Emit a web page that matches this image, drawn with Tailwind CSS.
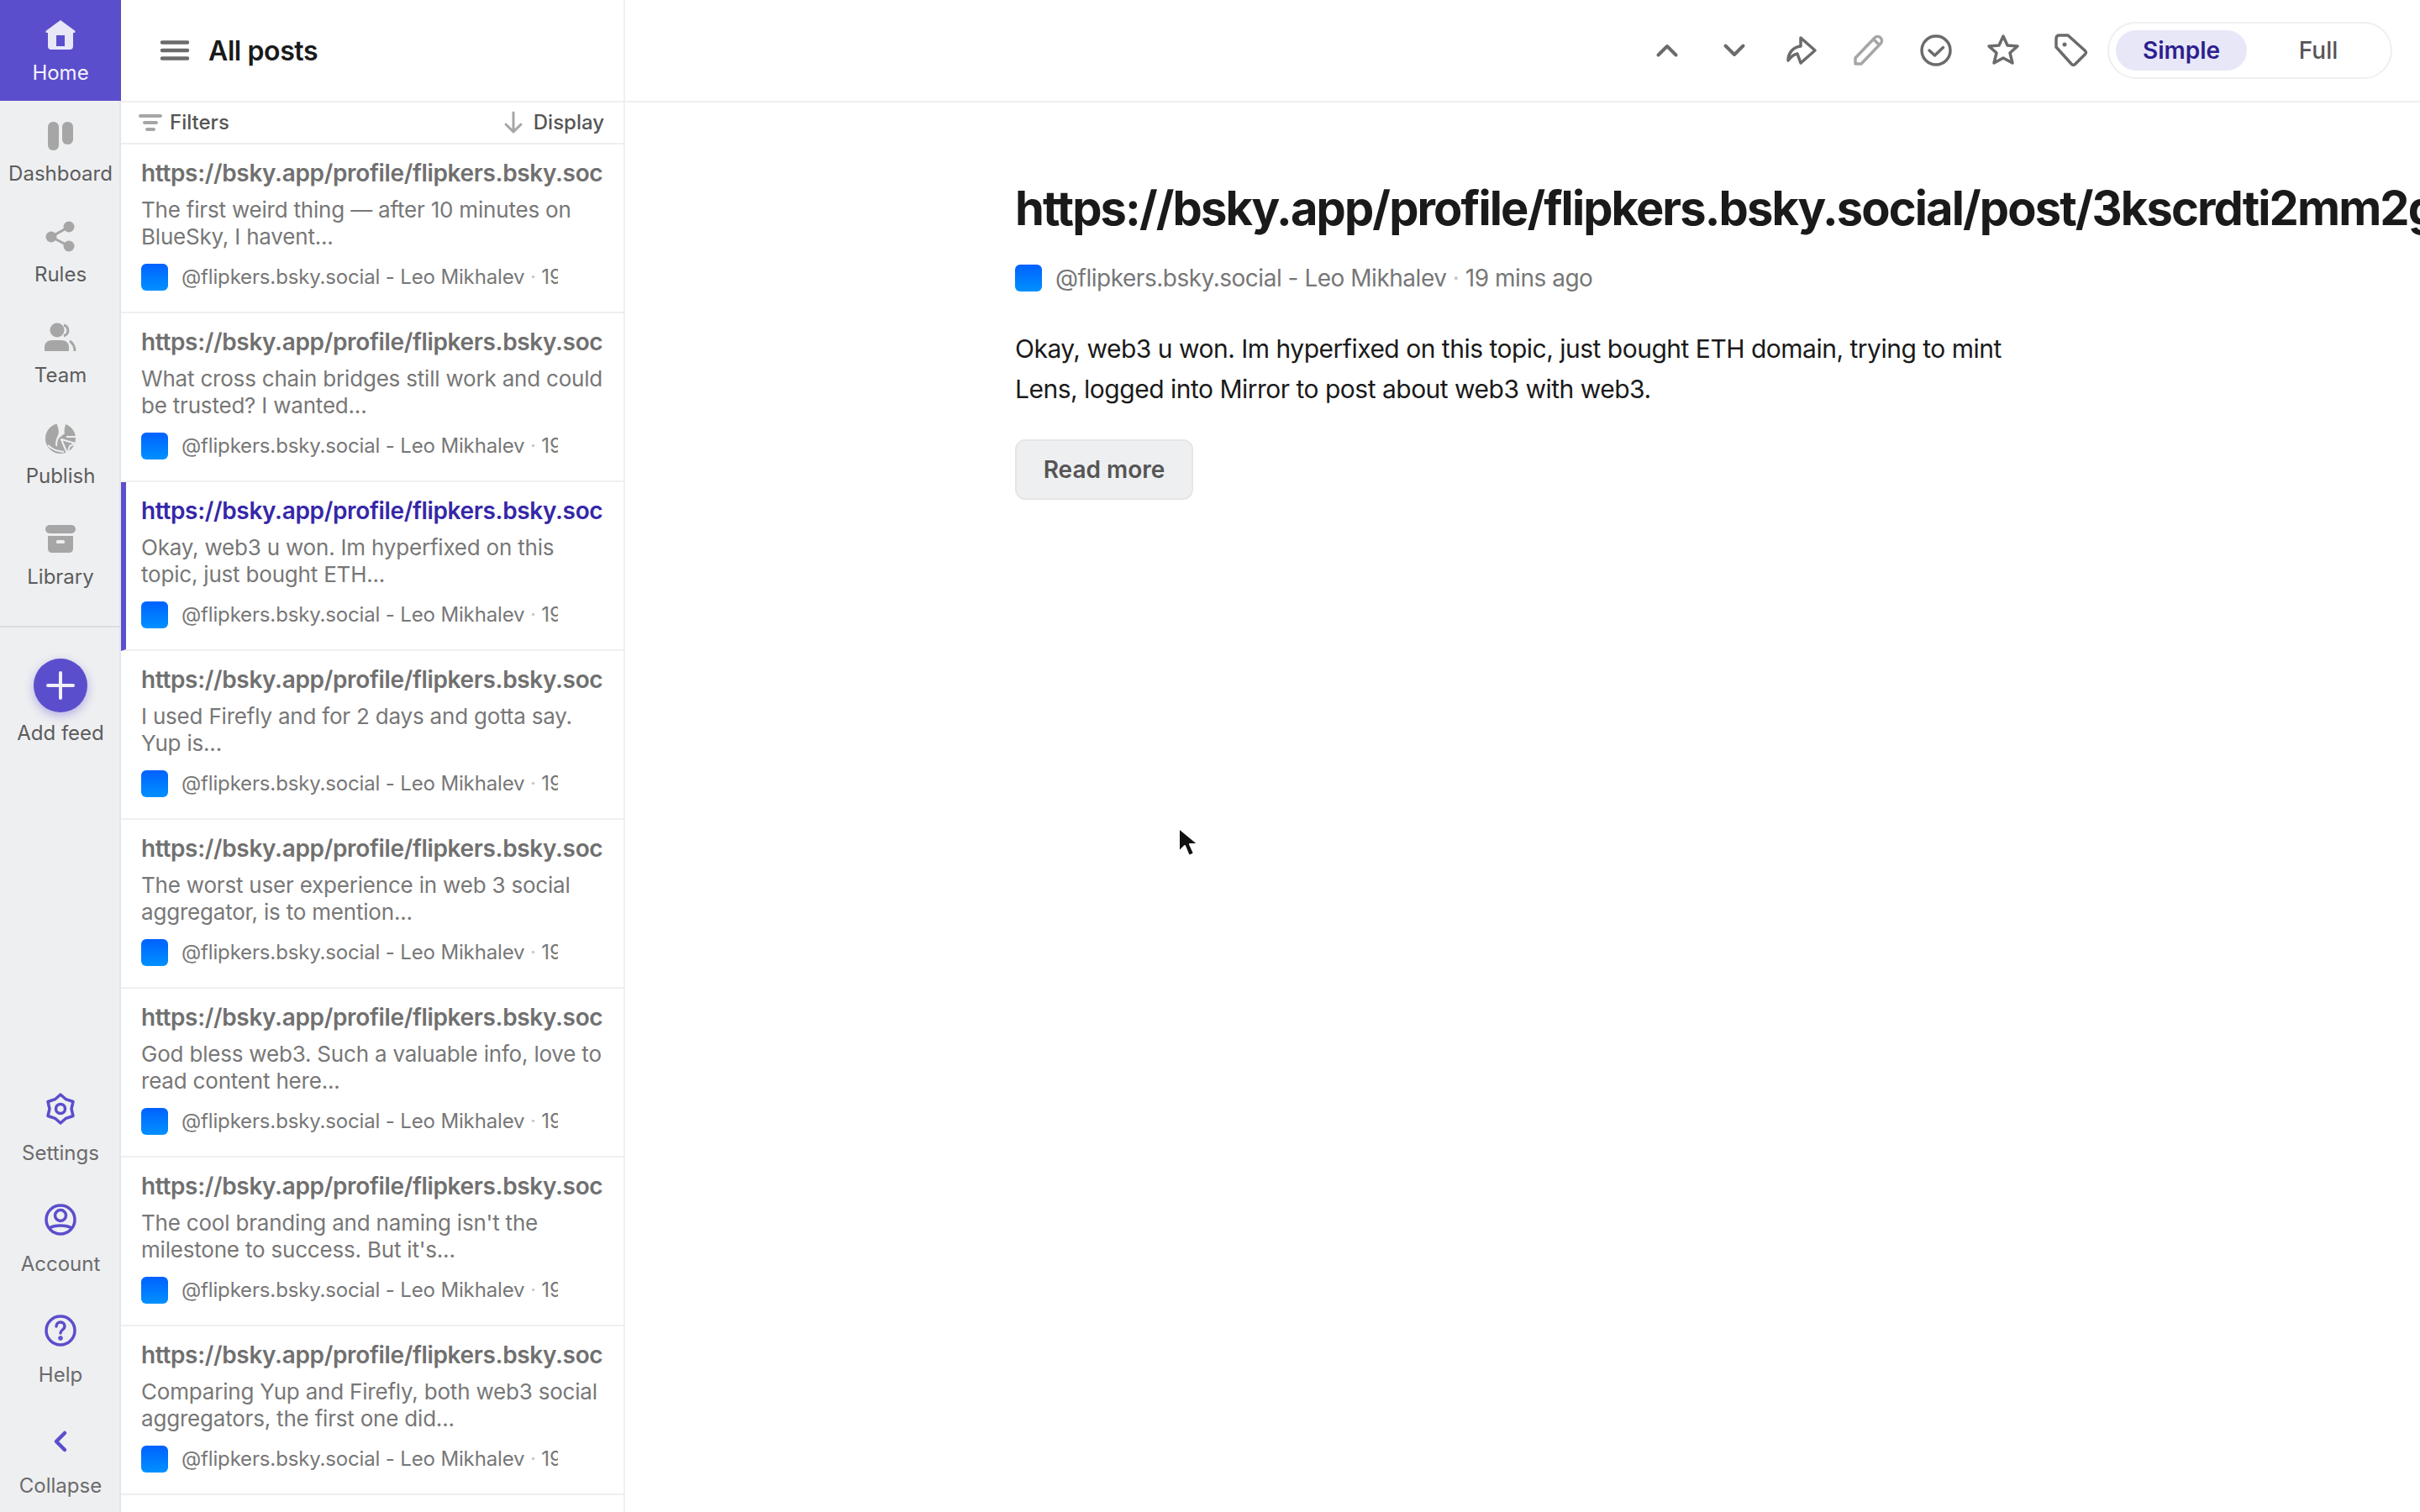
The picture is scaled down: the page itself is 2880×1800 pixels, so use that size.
<!DOCTYPE html>
<html lang="en">
<head>
  <meta charset="UTF-8">
  <title>All posts</title>
  <script src="https://cdn.jsdelivr.net/npm/@tailwindcss/browser@4"></script>
</head>
<body class="relative w-[2880px] h-[1800px] overflow-hidden bg-white font-['Inter',sans-serif] flex">

  <!-- left nav -->
  <nav class="w-[144px] h-full shrink-0 flex flex-col bg-[#eeeff1] shadow-[inset_-2px_0_0_#e4e5e8] text-[24px] leading-[32px] text-[#5c5c5c]">
    <a class="w-[144px] h-[120px] shrink-0 flex flex-col items-center bg-[#5b4ecc] text-[#f4f3fc]">
      <svg class="mt-[18px] w-[48px] h-[48px]" viewBox="0 0 48 48"><path fill="#e8e7f8" d="M24 6 41 18.500Q42.500 21 40 21H39V37Q39 41 35 41H13Q9 41 9 37V21H8Q5.500 21 7 18.500Z"/><rect x="19" y="24" width="10" height="13" fill="#5b4ecc"/></svg>
      <span class="mt-[5px]">Home</span>
    </a>
    <a class="h-[120px] shrink-0 flex flex-col items-center">
      <svg class="mt-[18px] w-[48px] h-[48px]" viewBox="0 0 48 48"><rect x="9" y="7" width="13" height="34" rx="6" fill="#a6a6a6"/><rect x="26" y="7" width="13" height="27" rx="6" fill="#a6a6a6"/></svg>
      <span class="mt-[5px]">Dashboard</span>
    </a>
    <a class="h-[120px] shrink-0 flex flex-col items-center">
      <svg class="mt-[18px] w-[48px] h-[48px]" viewBox="0 0 48 48"><path stroke="#a6a6a6" stroke-width="3" fill="none" d="M34 12 13 24l21 11"/><circle cx="34" cy="12" r="6.500" fill="#a6a6a6"/><circle cx="13" cy="24" r="6.500" fill="#a6a6a6"/><circle cx="34" cy="35" r="6.500" fill="#a6a6a6"/></svg>
      <span class="mt-[5px]">Rules</span>
    </a>
    <a class="h-[120px] shrink-0 flex flex-col items-center">
      <svg class="mt-[18px] w-[48px] h-[48px]" viewBox="0 0 48 48"><circle cx="20" cy="15" r="8.500" fill="#a6a6a6"/><path fill="#a6a6a6" d="M5 40v-5c0-5 4-8 9-8h11c5 0 9 3 9 8v5Z"/><path fill="none" stroke="#a6a6a6" stroke-width="3" d="M28 9c6 2 7 10 0 13M35 28c3 2 6 6 6 12"/></svg>
      <span class="mt-[5px]">Team</span>
    </a>
    <a class="h-[120px] shrink-0 flex flex-col items-center">
      <svg class="mt-[18px] w-[48px] h-[48px]" viewBox="0 0 48 48"><circle cx="24" cy="24" r="18" fill="#a6a6a6"/><path fill="#eeeff1" d="M19 5 31 5C29 10 28 14 29 18L24 22C21 24 20 28 20 34L18 32C18 28 19 24 21 20 23 16 21 10 19 5Z"/><path fill="none" stroke="#eeeff1" stroke-width="2" d="M9 32C15 38 21 39 28 40M31 22 44 22"/><path fill="#a6a6a6" stroke="#eeeff1" stroke-width="2" stroke-linejoin="round" d="M25 25 42 30 35 33 32 42Z"/></svg>
      <span class="mt-[5px]">Publish</span>
    </a>
    <a class="h-[120px] shrink-0 flex flex-col items-center">
      <svg class="mt-[18px] w-[48px] h-[48px]" viewBox="0 0 48 48"><rect x="6" y="7" width="36" height="10" rx="5" fill="#a6a6a6"/><path fill="#a6a6a6" d="M9 20h30v15c0 3-2 5-5 5H14c-3 0-5-2-5-5Z"/><rect x="19" y="25" width="10" height="4" rx="1.500" fill="#eeeff1"/></svg>
      <span class="mt-[5px]">Library</span>
    </a>
    <div class="mt-[25px] w-[142px] h-[2px] bg-[#dcdde0]"></div>
    <a class="mt-[37px] flex flex-col items-center">
      <span class="w-[64px] h-[64px] rounded-full bg-[#5b4ecc] flex items-center justify-center shadow-[0_4px_12px_rgba(91,78,204,0.4)]">
        <svg class="w-[48px] h-[48px]" viewBox="0 0 48 48"><path stroke="#f1f0fb" stroke-width="4" stroke-linecap="round" d="M24 9v30M9 24h30"/></svg>
      </span>
      <span class="mt-[9px]">Add feed</span>
    </a>
    <div class="mt-auto pb-[8px] flex flex-col gap-[32px] text-[#6b6b6b]">
      <a class="flex flex-col items-center h-[100px]">
        <svg class="w-[48px] h-[48px]" viewBox="0 0 48 48" fill="none" stroke="#5b4ecc" stroke-width="3.500" stroke-linejoin="round"><path d="M24 7 30.500 12.700 39 15.500 37 24 39 32.500 30.500 35.300 24 41 17.500 35.300 9 32.500 11 24 9 15.500 17.500 12.700Z"/><circle cx="24" cy="24" r="5.500"/></svg>
        <span class="mt-[13px]">Settings</span>
      </a>
      <a class="flex flex-col items-center h-[100px]">
        <svg class="w-[48px] h-[48px]" viewBox="0 0 48 48" fill="none" stroke="#5b4ecc" stroke-width="3.500"><circle cx="24" cy="24" r="17"/><circle cx="24" cy="19" r="6.500"/><path d="M11 34c3-2 8-3 13-3s10 1 13 3"/></svg>
        <span class="mt-[13px]">Account</span>
      </a>
      <a class="flex flex-col items-center h-[100px]">
        <svg class="w-[48px] h-[48px]" viewBox="0 0 48 48" fill="none" stroke="#5b4ecc" stroke-width="3.500" stroke-linecap="round"><circle cx="24" cy="24" r="17"/><path d="M19 19c0-3 2-5 5-5s5 2 5 5c0 4-5 4-5 8"/><circle cx="24" cy="33" r="1" fill="#5b4ecc"/></svg>
        <span class="mt-[13px]">Help</span>
      </a>
      <a class="flex flex-col items-center h-[100px]">
        <svg class="w-[48px] h-[48px]" viewBox="0 0 48 48" fill="none" stroke="#5b4ecc" stroke-width="4.500" stroke-linecap="round" stroke-linejoin="round"><path d="M29 14 19 24l10 10"/></svg>
        <span class="mt-[13px]">Collapse</span>
      </a>
    </div>
  </nav>

  <!-- post list -->
  <section class="w-[600px] h-full shrink-0 flex flex-col border-r-2 border-[#efefef] overflow-hidden">
    <header class="h-[122px] shrink-0 flex items-center border-b-2 border-[#efefef] pl-[46px]">
      <svg class="w-[36px] h-[36px]" viewBox="0 0 36 36"><path stroke="#6b6b6b" stroke-width="4.500" stroke-linecap="round" d="M3 8.500h30M3 18h30M3 27.500h30"/></svg>
      <h1 class="ml-[22px] mt-[1px] text-[32px] leading-[40px] tracking-[-0.4px] font-semibold text-[#1a1a1a]">All posts</h1>
    </header>
    <div class="h-[50px] shrink-0 flex items-center justify-between border-b-2 border-[#efefef] pl-[20px] pr-[23px] text-[24px] font-medium text-[#555]">
      <div class="flex items-center gap-[8px]">
        <svg class="w-[30px] h-[24px]" viewBox="0 0 30 24"><path stroke="#a6a6a6" stroke-width="4" stroke-linecap="round" d="M3 4h24M8 12h14M11 20h8"/></svg>
        <span>Filters</span>
      </div>
      <div class="flex items-center gap-[12px]">
        <svg class="w-[24px] h-[28px]" viewBox="0 0 24 28" fill="none"><path stroke="#a6a6a6" stroke-width="3" stroke-linecap="round" stroke-linejoin="round" d="M12 2v23M3 16l9 9 9-9"/></svg>
        <span>Display</span>
      </div>
    </div>

    <article class="h-[201px] shrink-0 border-b-2 border-[#efefef] pt-[14px] pl-[24px] pr-[24px]">
      <h2 class="text-[28px] leading-[40px] tracking-[-0.35px] font-semibold text-[#707070] whitespace-nowrap overflow-hidden">https://bsky.app/profile/flipkers.bsky.social/post/3kscrdti2</h2>
      <p class="mt-[8px] text-[26px] leading-[32px] tracking-[-0.2px] text-[#777]">The first weird thing — after 10 minutes on BlueSky, I havent...</p>
      <div class="mt-[16px] flex items-center w-[496px] overflow-hidden text-[24px] leading-[32px] tracking-[-0.15px] text-[#777] whitespace-nowrap"><i class="w-[32px] h-[32px] shrink-0 rounded-[6px] bg-linear-to-b from-[#0060ff] to-[#0090ff]"></i><span class="ml-[16px]">@flipkers.bsky.social - Leo Mikhalev <span class="text-[#c4c4c4]">·</span> 19 mins ago</span></div>
    </article>
    <article class="h-[201px] shrink-0 border-b-2 border-[#efefef] pt-[14px] pl-[24px] pr-[24px]">
      <h2 class="text-[28px] leading-[40px] tracking-[-0.35px] font-semibold text-[#707070] whitespace-nowrap overflow-hidden">https://bsky.app/profile/flipkers.bsky.social/post/3kscrdti2</h2>
      <p class="mt-[8px] text-[26px] leading-[32px] tracking-[-0.2px] text-[#777]">What cross chain bridges still work and could be trusted? I wanted...</p>
      <div class="mt-[16px] flex items-center w-[496px] overflow-hidden text-[24px] leading-[32px] tracking-[-0.15px] text-[#777] whitespace-nowrap"><i class="w-[32px] h-[32px] shrink-0 rounded-[6px] bg-linear-to-b from-[#0060ff] to-[#0090ff]"></i><span class="ml-[16px]">@flipkers.bsky.social - Leo Mikhalev <span class="text-[#c4c4c4]">·</span> 19 mins ago</span></div>
    </article>
    <article class="h-[201px] shrink-0 border-b-2 border-[#efefef] border-l-[6px] border-l-[#5b4ecc] pt-[14px] pl-[18px] pr-[24px]">
      <h2 class="text-[28px] leading-[40px] tracking-[-0.35px] font-semibold text-[#3527a8] whitespace-nowrap overflow-hidden">https://bsky.app/profile/flipkers.bsky.social/post/3kscrdti2</h2>
      <p class="mt-[8px] text-[26px] leading-[32px] tracking-[-0.2px] text-[#777]">Okay, web3 u won. Im hyperfixed on this topic, just bought ETH...</p>
      <div class="mt-[16px] flex items-center w-[496px] overflow-hidden text-[24px] leading-[32px] tracking-[-0.15px] text-[#777] whitespace-nowrap"><i class="w-[32px] h-[32px] shrink-0 rounded-[6px] bg-linear-to-b from-[#0060ff] to-[#0090ff]"></i><span class="ml-[16px]">@flipkers.bsky.social - Leo Mikhalev <span class="text-[#c4c4c4]">·</span> 19 mins ago</span></div>
    </article>
    <article class="h-[201px] shrink-0 border-b-2 border-[#efefef] pt-[14px] pl-[24px] pr-[24px]">
      <h2 class="text-[28px] leading-[40px] tracking-[-0.35px] font-semibold text-[#707070] whitespace-nowrap overflow-hidden">https://bsky.app/profile/flipkers.bsky.social/post/3kscrdti2</h2>
      <p class="mt-[8px] text-[26px] leading-[32px] tracking-[-0.2px] text-[#777]">I used Firefly and for 2 days and gotta say. Yup is...</p>
      <div class="mt-[16px] flex items-center w-[496px] overflow-hidden text-[24px] leading-[32px] tracking-[-0.15px] text-[#777] whitespace-nowrap"><i class="w-[32px] h-[32px] shrink-0 rounded-[6px] bg-linear-to-b from-[#0060ff] to-[#0090ff]"></i><span class="ml-[16px]">@flipkers.bsky.social - Leo Mikhalev <span class="text-[#c4c4c4]">·</span> 19 mins ago</span></div>
    </article>
    <article class="h-[201px] shrink-0 border-b-2 border-[#efefef] pt-[14px] pl-[24px] pr-[24px]">
      <h2 class="text-[28px] leading-[40px] tracking-[-0.35px] font-semibold text-[#707070] whitespace-nowrap overflow-hidden">https://bsky.app/profile/flipkers.bsky.social/post/3kscrdti2</h2>
      <p class="mt-[8px] text-[26px] leading-[32px] tracking-[-0.2px] text-[#777]">The worst user experience in web 3 social aggregator, is to mention...</p>
      <div class="mt-[16px] flex items-center w-[496px] overflow-hidden text-[24px] leading-[32px] tracking-[-0.15px] text-[#777] whitespace-nowrap"><i class="w-[32px] h-[32px] shrink-0 rounded-[6px] bg-linear-to-b from-[#0060ff] to-[#0090ff]"></i><span class="ml-[16px]">@flipkers.bsky.social - Leo Mikhalev <span class="text-[#c4c4c4]">·</span> 19 mins ago</span></div>
    </article>
    <article class="h-[201px] shrink-0 border-b-2 border-[#efefef] pt-[14px] pl-[24px] pr-[24px]">
      <h2 class="text-[28px] leading-[40px] tracking-[-0.35px] font-semibold text-[#707070] whitespace-nowrap overflow-hidden">https://bsky.app/profile/flipkers.bsky.social/post/3kscrdti2</h2>
      <p class="mt-[8px] text-[26px] leading-[32px] tracking-[-0.2px] text-[#777]">God bless web3. Such a valuable info, love to read content here...</p>
      <div class="mt-[16px] flex items-center w-[496px] overflow-hidden text-[24px] leading-[32px] tracking-[-0.15px] text-[#777] whitespace-nowrap"><i class="w-[32px] h-[32px] shrink-0 rounded-[6px] bg-linear-to-b from-[#0060ff] to-[#0090ff]"></i><span class="ml-[16px]">@flipkers.bsky.social - Leo Mikhalev <span class="text-[#c4c4c4]">·</span> 19 mins ago</span></div>
    </article>
    <article class="h-[201px] shrink-0 border-b-2 border-[#efefef] pt-[14px] pl-[24px] pr-[24px]">
      <h2 class="text-[28px] leading-[40px] tracking-[-0.35px] font-semibold text-[#707070] whitespace-nowrap overflow-hidden">https://bsky.app/profile/flipkers.bsky.social/post/3kscrdti2</h2>
      <p class="mt-[8px] text-[26px] leading-[32px] tracking-[-0.2px] text-[#777]">The cool branding and naming isn't the milestone to success. But it's...</p>
      <div class="mt-[16px] flex items-center w-[496px] overflow-hidden text-[24px] leading-[32px] tracking-[-0.15px] text-[#777] whitespace-nowrap"><i class="w-[32px] h-[32px] shrink-0 rounded-[6px] bg-linear-to-b from-[#0060ff] to-[#0090ff]"></i><span class="ml-[16px]">@flipkers.bsky.social - Leo Mikhalev <span class="text-[#c4c4c4]">·</span> 19 mins ago</span></div>
    </article>
    <article class="h-[201px] shrink-0 border-b-2 border-[#efefef] pt-[14px] pl-[24px] pr-[24px]">
      <h2 class="text-[28px] leading-[40px] tracking-[-0.35px] font-semibold text-[#707070] whitespace-nowrap overflow-hidden">https://bsky.app/profile/flipkers.bsky.social/post/3kscrdti2</h2>
      <p class="mt-[8px] text-[26px] leading-[32px] tracking-[-0.2px] text-[#777]">Comparing Yup and Firefly, both web3 social aggregators, the first one did...</p>
      <div class="mt-[16px] flex items-center w-[496px] overflow-hidden text-[24px] leading-[32px] tracking-[-0.15px] text-[#777] whitespace-nowrap"><i class="w-[32px] h-[32px] shrink-0 rounded-[6px] bg-linear-to-b from-[#0060ff] to-[#0090ff]"></i><span class="ml-[16px]">@flipkers.bsky.social - Leo Mikhalev <span class="text-[#c4c4c4]">·</span> 19 mins ago</span></div>
    </article>
  </section>

  <!-- reader -->
  <main class="flex-1 min-w-0 flex flex-col">
    <div class="h-[122px] shrink-0 flex items-center justify-end border-b-2 border-[#efefef] pr-[33px]">
      <div class="flex items-center">
        <button class="w-[80px] h-[48px] flex items-center justify-center"><svg class="w-[48px] h-[48px]" viewBox="0 0 48 48" fill="none" stroke="#6b6b6b" stroke-width="4" stroke-linecap="round" stroke-linejoin="round"><path d="m13.500 29.500 10.500-10.500 10.500 10.500"/></svg></button>
        <button class="w-[80px] h-[48px] flex items-center justify-center"><svg class="w-[48px] h-[48px]" viewBox="0 0 48 48" fill="none" stroke="#6b6b6b" stroke-width="4" stroke-linecap="round" stroke-linejoin="round"><path d="m13.500 18.500 10.500 10.500 10.500-10.500"/></svg></button>
        <button class="w-[80px] h-[48px] flex items-center justify-center"><svg class="w-[48px] h-[48px]" viewBox="0 0 48 48" fill="none" stroke="#6b6b6b" stroke-width="3.500" stroke-linejoin="round"><path d="M23 9 40 24 23 39 19 28C14 29 11 32 8 36 8 27 14 20 23 19Z"/></svg></button>
        <button class="w-[80px] h-[48px] flex items-center justify-center"><svg class="w-[48px] h-[48px]" viewBox="0 0 48 48" fill="none" stroke="#a6a6a6" stroke-width="3.500" stroke-linejoin="round"><path d="M8 40V33L31 9c2-2 5-2 7 0s2 5 0 7L15 40Z"/><path d="m30 11 7 7"/></svg></button>
        <button class="w-[80px] h-[48px] flex items-center justify-center"><svg class="w-[48px] h-[48px]" viewBox="0 0 48 48" fill="none" stroke="#6b6b6b" stroke-width="3.500" stroke-linecap="round" stroke-linejoin="round"><circle cx="24" cy="24" r="17"/><path d="m16 24 6.500 6 10-9.500"/></svg></button>
        <button class="w-[80px] h-[48px] flex items-center justify-center"><svg class="w-[48px] h-[48px]" viewBox="0 0 48 48" fill="none" stroke="#6b6b6b" stroke-width="3.500" stroke-linejoin="round"><path d="m24 7 5 11 12 1-9 8 3 12-11-6-11 6 3-12-9-8 12-1Z"/></svg></button>
        <button class="w-[80px] h-[48px] flex items-center justify-center"><svg class="w-[48px] h-[48px]" viewBox="0 0 48 48" fill="none" stroke="#6b6b6b" stroke-width="3.500" stroke-linejoin="round"><path d="M7 10C7 7 9 6 11 6H21L41 24C43 26 43 27 41 29L30 40C28 42 27 42 25 40L7 20Z"/><circle cx="17" cy="17" r="2.500" fill="#6b6b6b" stroke="none"/></svg></button>
      </div>
      <div class="ml-[4px] w-[339px] h-[68px] rounded-full border-2 border-[#efefef] flex items-center pl-[8px] text-[28px]">
        <span class="w-[156px] h-[48px] rounded-full bg-[#e8e7f8] flex items-center justify-center font-semibold text-[#2d1f8f]">Simple</span>
        <span class="w-[170px] text-center font-medium text-[#555]">Full</span>
      </div>
    </div>
    <div class="flex-1 pl-[464px] pt-[92px] overflow-hidden">
      <h1 class="text-[56px] leading-[68px] tracking-[-1.9px] font-bold text-[#1a1a1a] whitespace-nowrap">https://bsky.app/profile/flipkers.bsky.social/post/3kscrdti2mm2g</h1>
      <div class="mt-[33px] flex items-center text-[28px] leading-[32px] tracking-[-0.48px] text-[#777]"><i class="w-[32px] h-[32px] shrink-0 rounded-[6px] bg-linear-to-b from-[#0060ff] to-[#0090ff]"></i><span class="ml-[16px]">@flipkers.bsky.social - Leo Mikhalev <span class="text-[#c4c4c4]">·</span> 19 mins ago</span></div>
      <p class="mt-[44px] w-[1200px] text-[30px] leading-[48px] tracking-[-0.5px] text-[#1a1a1a]">Okay, web3 u won. Im hyperfixed on this topic, just bought ETH domain, trying to mint Lens, logged into Mirror to post about web3 with web3.</p>
      <button class="mt-[36px] w-[212px] h-[72px] rounded-[12px] bg-[#eeeff1] border-2 border-[#e6e6e6] text-[28px] font-semibold text-[#555]">Read more</button>
    </div>
  </main>

  <!-- mouse pointer -->
  <svg class="absolute left-[1398px] top-[982px] w-[34px] h-[44px]" viewBox="0 0 34 44"><path fill="#111" stroke="#fff" stroke-width="2" stroke-linejoin="round" d="M5 4v28l7-7 5 12 6-3-5-11h10Z"/></svg>
</body>
</html>
